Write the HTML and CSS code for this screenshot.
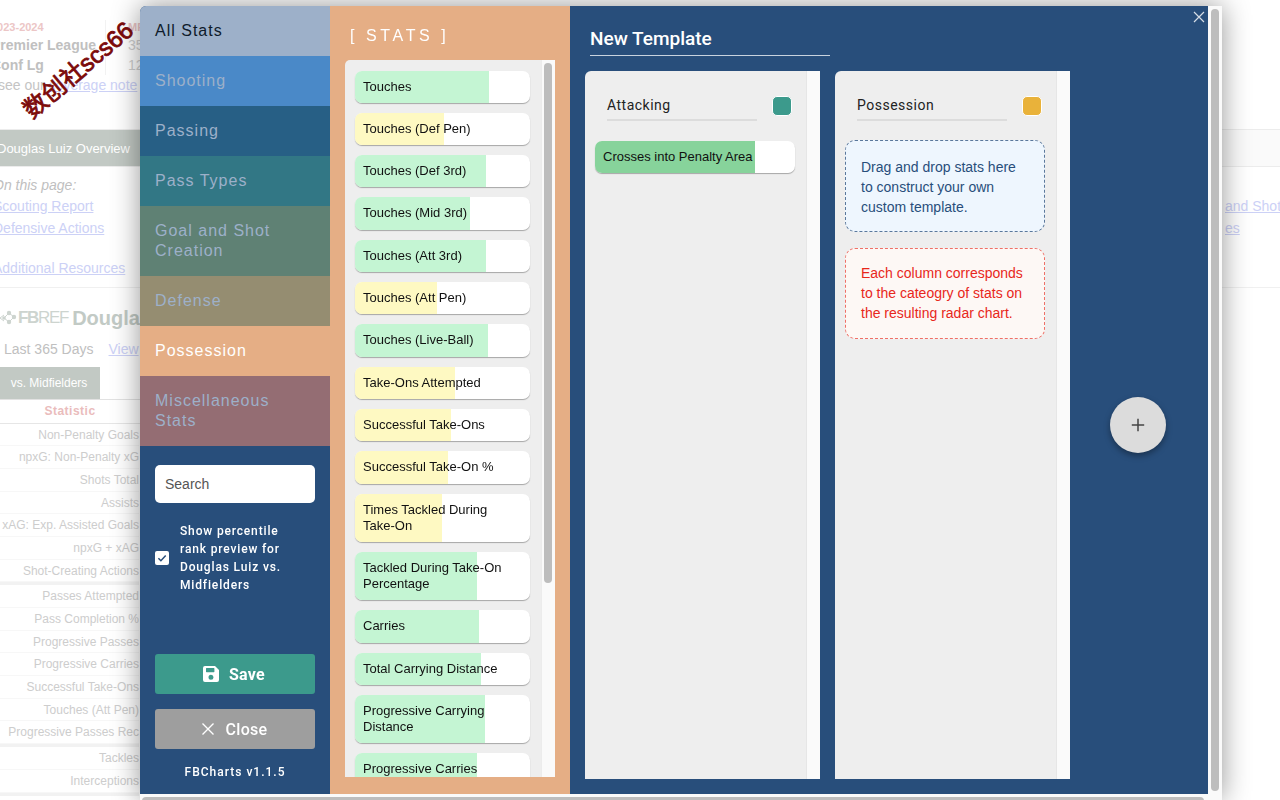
FILE: index.html
```html
<!DOCTYPE html>
<html lang="en">
<head>
<meta charset="utf-8">
<title>FBCharts</title>
<link rel="stylesheet" href="styles.css">
</head>
<body>
<div class="page">
  <div class="season">
    <div class="season-names">
      <div class="season-year">2023-2024</div>
      <div class="season-comp">Premier League</div>
      <div class="season-comp">Conf Lg</div>
    </div>
    <div class="season-nums">
      <div class="season-year">MP</div>
      <div class="season-num">35</div>
      <div class="season-num">12</div>
    </div>
  </div>
  <p class="note">see our <a href="#">coverage note</a></p>
  <div class="pagebar"><span class="pagebar-tab">Douglas Luiz Overview</span></div>
  <div class="onpage">
    <div class="onpage-left">
      <div class="onpage-title">On this page:</div>
      <a href="#">Scouting Report</a>
      <a href="#">Defensive Actions</a>
      <a href="#" class="gap-link">Additional Resources</a>
    </div>
    <div class="onpage-right">
      <a href="#">and Shot</a>
      <a href="#">es</a>
    </div>
  </div>
  <div class="brand">
    <svg class="brand-logo" viewBox="0 0 18 16" width="18" height="16"><g fill="#cdd4cf"><circle cx="9" cy="3" r="2.200"/><circle cx="14" cy="7" r="2.200"/><circle cx="9" cy="12" r="2.200"/><circle cx="4" cy="8" r="1.800"/></g><path d="M0 8l4-3M0 8l4 3M9 3l5 4-5 5-5-4z" stroke="#cdd4cf" fill="none"/></svg>
    <span class="brand-mark">FB</span><span class="brand-ref">REF</span><span class="brand-name">Douglas Luiz</span>
  </div>
  <div class="period"><span>Last 365 Days</span><a href="#">View</a></div>
  <div class="subtabs"><span class="subtab">vs. Midfielders</span></div>
  <div class="stat-table">
    <div class="stat-head">Statistic</div>
    <div class="stat-group">
      <div class="stat-row">Non-Penalty Goals</div>
      <div class="stat-row">npxG: Non-Penalty xG</div>
      <div class="stat-row">Shots Total</div>
      <div class="stat-row">Assists</div>
      <div class="stat-row">xAG: Exp. Assisted Goals</div>
      <div class="stat-row">npxG + xAG</div>
      <div class="stat-row">Shot-Creating Actions</div>
    </div>
    <div class="stat-group">
      <div class="stat-row">Passes Attempted</div>
      <div class="stat-row">Pass Completion %</div>
      <div class="stat-row">Progressive Passes</div>
      <div class="stat-row">Progressive Carries</div>
      <div class="stat-row">Successful Take-Ons</div>
      <div class="stat-row">Touches (Att Pen)</div>
      <div class="stat-row">Progressive Passes Rec</div>
    </div>
    <div class="stat-group">
      <div class="stat-row">Tackles</div>
      <div class="stat-row">Interceptions</div>
    </div>
  </div>
</div>

<div class="watermark">数创社scs66</div>

<div class="modal">
  <div class="modal-body">
    <aside class="sidebar">
      <nav class="tabs">
        <div class="tab tab-all">All Stats</div>
        <div class="tab tab-shooting">Shooting</div>
        <div class="tab tab-passing">Passing</div>
        <div class="tab tab-types">Pass Types</div>
        <div class="tab tab-goal">Goal and Shot Creation</div>
        <div class="tab tab-defense">Defense</div>
        <div class="tab tab-possession">Possession</div>
        <div class="tab tab-misc">Miscellaneous Stats</div>
      </nav>
      <div class="controls">
        <div class="search">Search</div>
        <label class="preview">
          <span class="check"><svg viewBox="0 0 14 14" width="14" height="14"><path d="M3.400 7.200l2.500 2.500 4.800-5.200" fill="none" stroke="#284e7b" stroke-width="1.500"/></svg></span>
          <span class="preview-text">Show percentile rank preview for Douglas Luiz vs. Midfielders</span>
        </label>
        <button class="btn btn-save">
          <svg viewBox="0 0 16 16" width="16" height="16"><path fill="#fff" fill-rule="evenodd" d="M2 0h10l4 4v10a2 2 0 0 1-2 2H2a2 2 0 0 1-2-2V2a2 2 0 0 1 2-2zm1 2.500v3.200c0 .3.2.5.5.5h7.400c.3 0 .5-.2.5-.5V2.500c0-.3-.2-.5-.5-.5H3.500c-.3 0-.5.2-.5.5zM8 8.800a2.500 2.500 0 1 0 0 5 2.500 2.500 0 0 0 0-5z"/></svg>
          <span>Save</span>
        </button>
        <button class="btn btn-close">
          <svg viewBox="0 0 14 14" width="14" height="14"><path d="M1.500 1.500l11 11M12.500 1.500l-11 11" stroke="#fff" stroke-width="1.400" fill="none"/></svg>
          <span>Close</span>
        </button>
        <div class="version">FBCharts v1.1.5</div>
      </div>
    </aside>

    <section class="stats">
      <h2 class="stats-title">[ STATS ]</h2>
      <div class="stats-box">
        <div class="stats-list">
          <div class="item"><i class="fill green" style="width:76.6%"></i><span>Touches</span></div>
          <div class="item"><i class="fill yellow" style="width:50.7%"></i><span>Touches (Def Pen)</span></div>
          <div class="item"><i class="fill green" style="width:74.9%"></i><span>Touches (Def 3rd)</span></div>
          <div class="item"><i class="fill green" style="width:65.7%"></i><span>Touches (Mid 3rd)</span></div>
          <div class="item"><i class="fill green" style="width:74.9%"></i><span>Touches (Att 3rd)</span></div>
          <div class="item"><i class="fill yellow" style="width:46.9%"></i><span>Touches (Att Pen)</span></div>
          <div class="item"><i class="fill green" style="width:76%"></i><span>Touches (Live-Ball)</span></div>
          <div class="item"><i class="fill yellow" style="width:57.1%"></i><span>Take-Ons Attempted</span></div>
          <div class="item"><i class="fill yellow" style="width:54.9%"></i><span>Successful Take-Ons</span></div>
          <div class="item"><i class="fill yellow" style="width:52.9%"></i><span>Successful Take-On %</span></div>
          <div class="item"><i class="fill yellow" style="width:49.7%"></i><span>Times Tackled During Take-On</span></div>
          <div class="item"><i class="fill green" style="width:69.7%"></i><span>Tackled During Take-On Percentage</span></div>
          <div class="item"><i class="fill green" style="width:70.9%"></i><span>Carries</span></div>
          <div class="item"><i class="fill green" style="width:72%"></i><span>Total Carrying Distance</span></div>
          <div class="item"><i class="fill green" style="width:74%"></i><span>Progressive Carrying Distance</span></div>
          <div class="item"><i class="fill green" style="width:69.7%"></i><span>Progressive Carries</span></div>
        </div>
        <div class="vbar list-bar"><div class="vbar-thumb list-thumb"></div></div>
      </div>
    </section>

    <section class="builder">
      <h1 class="template-title">New Template</h1>
      <div class="columns">
        <div class="column">
          <div class="column-main">
            <div class="column-head">
              <span class="column-name">Attacking</span>
              <span class="swatch swatch-teal"></span>
            </div>
            <div class="item item-wide"><i class="fill strong" style="width:80%"></i><span>Crosses into Penalty Area</span></div>
          </div>
          <div class="column-track"></div>
        </div>
        <div class="column">
          <div class="column-main">
            <div class="column-head">
              <span class="column-name">Possession</span>
              <span class="swatch swatch-gold"></span>
            </div>
            <div class="hint hint-blue">Drag and drop stats here to construct your own custom template.</div>
            <div class="hint hint-red">Each column corresponds to the cateogry of stats on the resulting radar chart.</div>
          </div>
          <div class="column-track"></div>
        </div>
        <div class="add-wrap">
          <button class="add"><svg viewBox="0 0 14 14" width="14" height="14"><path d="M7 .8v12.400M.8 7h12.400" stroke="#444" stroke-width="1.500" fill="none"/></svg></button>
        </div>
      </div>
      <svg class="dismiss" viewBox="0 0 12 12" width="12" height="12"><path d="M1 1l10 10M11 1L1 11" stroke="#d6dde6" stroke-width="1.200" fill="none"/></svg>
    </section>
    <div class="vbar modal-bar"><div class="vbar-thumb modal-thumb"></div></div>
  </div>
  <div class="hbar"><div class="hbar-thumb"></div></div>
</div>
</body>
</html>
```
FILE: styles.css
```css
* { box-sizing: border-box; }
html, body { margin: 0; height: 800px; overflow: hidden; background: #fff; }
body { font-family: "Liberation Sans", Arial, sans-serif; }
a { color: #ccd1f6; text-decoration: underline; }
h1, h2 { margin: 0; }
button { border: 0; padding: 0; font: inherit; }

/* faded page behind the dialog */
.page { width: 1280px; height: 800px; overflow: hidden; color: #c4c4c4; padding-top: 20px; }
.season { display: flex; margin-left: -9px; height: 55px; }
.season-names { width: 115px; border-right: 1px solid #f2f2f2; }
.season-nums { padding-left: 22px; }
.season-year { font-size: 11px; line-height: 14px; font-weight: bold; color: #ecc6c6; }
.season-comp, .season-num { font-size: 14px; line-height: 20px; font-weight: bold; color: #c0c0c0; }
.season-num { font-weight: normal; color: #cfcfcf; }
.season-year + div { margin-top: 1px; }
.note { margin: 2px 0 0 -2px; font-size: 14px; line-height: 16px; color: #c4c4c4; }
.pagebar { margin-top: 36px; height: 38px; background: #fafafa; border-top: 1px solid #ececec; border-bottom: 1px solid #ececec; display: flex; }
.pagebar-tab { width: 140px; background: #c2c9c4; color: #fff; font-size: 13px; line-height: 37px; text-indent: -3px; white-space: nowrap; overflow: hidden; }
.onpage { display: flex; justify-content: space-between; height: 121px; padding-top: 9px; font-size: 14px; line-height: 22px; border-bottom: 1px solid #f0f0f0; }
.onpage-left, .onpage-right { display: flex; flex-direction: column; align-items: flex-start; }
.onpage-left { margin-left: -7px; }
.onpage-right { width: 55px; margin-top: 19px; white-space: nowrap; }
.onpage-title { font-style: italic; color: #c0c0c0; line-height: 19px; }
.gap-link { margin-top: 18px; }
.brand { display: flex; align-items: center; height: 43px; padding-top: 16px; font-size: 17px; line-height: 26px; color: #cdd4cf; white-space: nowrap; letter-spacing: -1.300px; }
.brand-logo { flex: none; display: block; }
.brand-mark { font-weight: bold; }
.brand-ref { font-weight: normal; }
.brand-name { font-weight: bold; margin-left: 4px; color: #c2cac5; font-size: 20px; letter-spacing: 0; }
.period { display: flex; gap: 15px; padding-left: 4px; margin-top: 8px; font-size: 14px; line-height: 20px; color: #c0c0c0; }
.subtabs { margin-top: 8px; height: 33px; border-bottom: 1px solid #e2e2e2; display: flex; width: 140px; }
.subtab { width: 100px; background: #c2c9c4; color: #fff; font-size: 12px; line-height: 33px; text-align: center; white-space: nowrap; padding-right: 2px; }
.stat-table { width: 139px; }
.stat-head { width: 140px; height: 23.500px; line-height: 23px; font-size: 12px; font-weight: bold; letter-spacing: .5px; color: #eabcbc; text-align: center; border-bottom: 1px solid #e6e6e6; }
.stat-group { border-bottom: 3px solid #f2f2f2; }
.stat-row { height: 22.700px; line-height: 22px; white-space: nowrap; font-size: 12px; color: #cdcdcd; border-bottom: 1px solid #f7f7f7; display: flex; justify-content: flex-end; }

.watermark { position: absolute; left: 11px; top: 57px; font-size: 24px; line-height: 26px; font-weight: normal; color: #7c0a0a; -webkit-text-stroke: .8px #7c0a0a; transform: rotate(-40deg); white-space: nowrap; font-family: "Liberation Sans", "Noto Sans CJK SC", sans-serif; }

/* dialog */
.modal { position: fixed; left: 140px; top: 6px; width: 1082px; height: 794px; display: flex; flex-direction: column; background: #fafafa; box-shadow: 0 0 28px rgba(0,0,0,.42); border-top-left-radius: 6px; overflow: hidden; }
.modal-body { display: flex; height: 788px; flex: none; }
.hbar { flex: none; height: 6px; padding: 3px 18px 0 2px; background: #fafafa; }
.hbar-thumb { height: 8px; background: #bdbdbd; border-radius: 4px; }
.vbar { flex: none; width: 14px; background: #fafafa; padding: 3px; }
.vbar-thumb { width: 8px; background: #bdbdbd; border-radius: 4px; }
.modal-thumb { height: 782px; }
.list-thumb { height: 520px; }
.list-bar { border-left: 1px solid #ececec; padding-left: 2px; }

.sidebar { width: 190px; flex: none; display: flex; flex-direction: column; background: #284e7b; }
.tab { padding: 15px; font-size: 16px; line-height: 20px; letter-spacing: 1px; color: #9db0c9; }
.tab-all { background: #9db0c9; color: #0f1b2b; }
.tab-shooting { background: #4a89c8; }
.tab-passing { background: #275f85; }
.tab-types { background: #327785; }
.tab-goal { background: #5f8174; }
.tab-defense { background: #958d71; }
.tab-possession { background: #e5ae85; color: #fff; }
.tab-misc { background: #946d73; }
.controls { flex: 1; display: flex; flex-direction: column; padding: 19px 15px 0; }
.search { height: 38px; border-radius: 5px; background: #fff; padding-left: 10px; font-size: 14px; line-height: 38px; color: #555; }
.preview { display: flex; align-items: center; height: 72px; margin-top: 19px; }
.check { flex: none; width: 14px; height: 14px; background: #fff; border-radius: 2px; margin-right: 11px; display: block; }
.check svg { display: block; }
.preview-text { width: 118px; font-family: Roboto, sans-serif; font-weight: 500; font-size: 12px; line-height: 18px; letter-spacing: .85px; color: #fff; }
.btn { height: 40px; width: 160px; border-radius: 3px; display: flex; align-items: center; justify-content: center; gap: 10px; padding-right: 2px; color: #fff; font-family: Roboto, sans-serif; font-weight: 700; font-size: 16px; letter-spacing: .3px; }
.btn svg { display: block; }
.btn-save { margin-top: 60px; background: #3c9a8c; }
.btn-close { margin-top: 15px; background: #9e9e9e; font-weight: 500; gap: 11px; }
.version { margin-top: 16px; text-align: center; font-family: Roboto, sans-serif; font-weight: 500; font-size: 12px; line-height: 14px; letter-spacing: 1px; color: #fff; }

.stats { width: 240px; flex: none; background: #e5ae85; padding: 0 15px; }
.stats-title { height: 54px; padding: 20px 0 0 5px; font-size: 16px; line-height: 20px; font-weight: normal; letter-spacing: 3.600px; color: #fff; white-space: nowrap; }
.stats-box { display: flex; height: 717px; border-top-left-radius: 5px; overflow: hidden; background: #eee; }
.stats-list { width: 196px; flex: none; height: 717px; overflow: hidden; padding: 10.500px 11px 0 10px; }
.item { position: relative; margin-bottom: 10px; padding: 8px 8px 8.330px; font-size: 13px; line-height: 16px; color: #111; background: #fff; border-radius: 7px; box-shadow: 0 1px 1px rgba(0,0,0,.3); overflow: hidden; }
.item span { position: relative; display: block; }
.fill { position: absolute; left: 0; top: 0; bottom: 0; display: block; }
.green { background: #c4f5d3; }
.yellow { background: #fef9c2; }
.strong { background: #87d39b; }

.builder { position: relative; flex: 1; min-width: 0; background: #284e7b; padding-left: 15px; }
.template-title { width: 240px; height: 50px; margin-left: 5px; padding-top: 21px; font-family: Roboto, sans-serif; font-weight: 500; font-size: 19px; line-height: 24px; color: #fff; border-bottom: 1px solid #c9d3df; }
.columns { display: flex; gap: 15px; margin-top: 15px; height: 708px; }
.column { width: 235px; flex: none; display: flex; background: #eee; border-top-left-radius: 6px; overflow: hidden; }
.column-main { width: 221px; flex: none; padding: 0 10px; }
.column-track { flex: 1; background: #fafafa; border-left: 1px solid #e6e6e6; }
.column-head { display: flex; justify-content: space-between; align-items: center; height: 70px; padding: 0 4px 0 12px; }
.column-name { width: 150px; height: 30px; font-family: Roboto, sans-serif; font-size: 14px; line-height: 28px; letter-spacing: .5px; color: #222; border-bottom: 2px solid #dcdcdc; }
.swatch { width: 20px; height: 20px; border-radius: 5px; border: 1px solid #fff; }
.swatch-teal { background: #3c9a8c; }
.swatch-gold { background: #e9b23a; }
.item-wide { width: 200px; }
.hint { width: 200px; border-radius: 10px; font-size: 14px; line-height: 20px; padding: 16px 15px 14px; }
.hint-blue { margin-top: -1px; background: #eef6fe; border: 1px dashed rgba(40,78,123,.75); color: #284e7b; }
.hint-red { margin-top: 16px; padding-top: 14px; padding-bottom: 15px; background: #fdf8f5; border: 1px dashed rgba(232,39,27,.65); color: #e8271b; }
.add-wrap { flex: 1; display: flex; align-items: center; padding-left: 25px; }
.add { width: 56px; height: 56px; border-radius: 50%; background: #dcdcdc; box-shadow: 0 3px 6px rgba(0,0,0,.35); display: flex; align-items: center; justify-content: center; }
.add svg { display: block; }
.dismiss { position: absolute; right: 3px; top: 5px; }
```
